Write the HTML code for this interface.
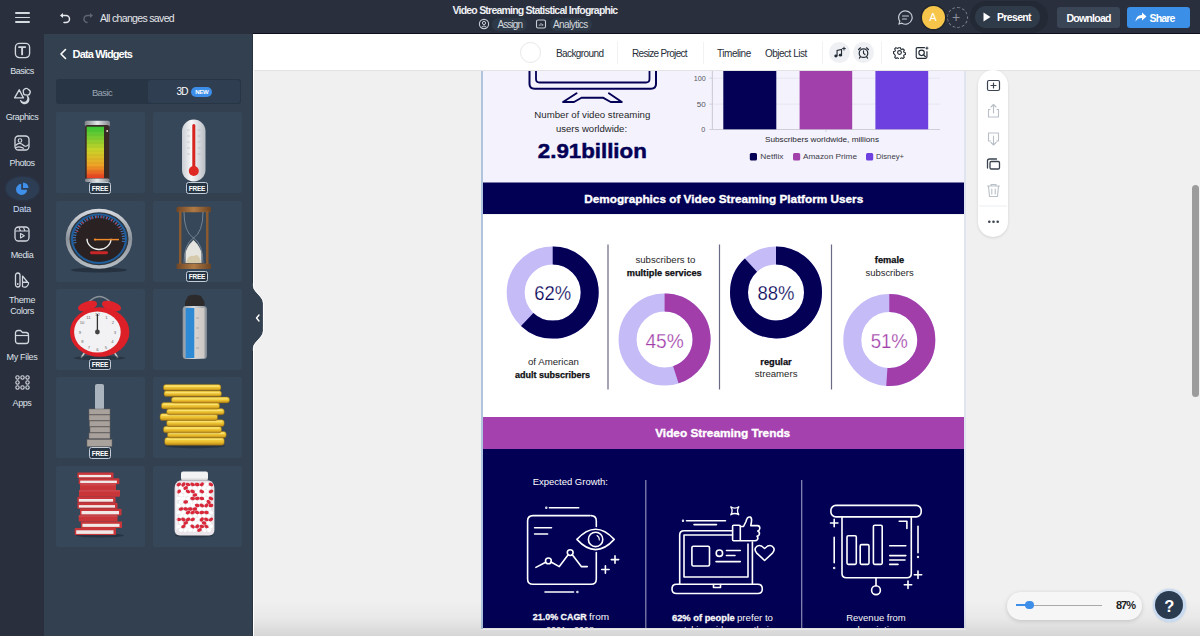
<!DOCTYPE html>
<html><head><meta charset="utf-8">
<style>
*{margin:0;padding:0;box-sizing:border-box}
html,body{width:1200px;height:636px;overflow:hidden;background:#f0f0f0;font-family:"Liberation Sans",sans-serif}
.a{position:absolute}
.t{position:absolute;white-space:nowrap;line-height:1}
#top{left:0;top:0;width:1200px;height:34px;background:#2a2f3e}
#rail{left:0;top:34px;width:44px;height:602px;background:#2a2f3e}
#panel{left:44px;top:34px;width:209px;height:602px;background:#324050}
#tb{left:253px;top:34px;width:947px;height:37px;background:#fff;border-bottom:1px solid #e3e3e3}
.lbl{position:absolute;width:44px;left:0;text-align:center;font-size:9px;color:#dde2e8;line-height:11px}
.card{position:absolute;width:89px;height:81.2px;background:#364759;border-radius:2px}
.free{position:absolute;width:22px;height:12px;border:1px solid #c3cdd8;border-radius:2.5px;background:#263443;color:#fff;font-size:6.5px;font-weight:bold;text-align:center;line-height:9.5px;letter-spacing:-0.2px}
.sep{position:absolute;width:1px;height:22px;top:42px;background:#f1f2f4}
.tbt{position:absolute;top:47.8px;font-size:10px;color:#262d38;white-space:nowrap;line-height:11px}
#ig{left:482px;top:71px;width:482px;height:557.5px;overflow:hidden}
.it{position:absolute;white-space:nowrap;line-height:1;text-align:center}
</style></head><body>
<!-- top bar -->
<div id="top" class="a"></div>
<!-- hamburger -->
<div class="a" style="left:15px;top:12px;width:14.5px;height:1.7px;background:#d5dae0;border-radius:1px"></div>
<div class="a" style="left:15px;top:16.6px;width:14.5px;height:1.7px;background:#d5dae0;border-radius:1px"></div>
<div class="a" style="left:15px;top:21.2px;width:14.5px;height:1.7px;background:#d5dae0;border-radius:1px"></div>
<!-- undo/redo -->
<svg class="a" style="left:58px;top:11px" width="14" height="14" viewBox="0 0 14 14"><path d="M3.5 4.5 H8 a3.5 3.5 0 0 1 0 7 H6" fill="none" stroke="#e6e9ee" stroke-width="1.5" stroke-linecap="round"/><path d="M2 4.5 L5 2 L5 7 Z" fill="#e6e9ee"/></svg>
<svg class="a" style="left:81px;top:11px" width="14" height="14" viewBox="0 0 14 14"><path d="M10.5 4.5 H7 a3.5 3.5 0 0 0 -1 7" fill="none" stroke="#5d6571" stroke-width="1.5" stroke-linecap="round"/><path d="M12 4.5 L9 2 L9 7 Z" fill="#5d6571"/></svg>
<div class="t" style="left:100px;top:13px;font-size:10.5px;letter-spacing:-0.66px;color:#e3e6ea">All changes saved</div>
<!-- title -->
<div class="t" style="left:452.5px;top:5px;font-size:10.5px;font-weight:bold;color:#eef0f3;letter-spacing:-0.78px">Video Streaming Statistical Infographic</div>
<div class="a" style="left:477.6px;top:18px;width:49.3px;height:12.5px;border-radius:6.25px;background:#272e3b"></div><div class="a" style="left:491.7px;top:18px;width:35.2px;height:12.5px;border-radius:6.25px;background:#2e3947"></div>
<svg class="a" style="left:478px;top:18px" width="12" height="12" viewBox="0 0 12 12"><circle cx="6" cy="6" r="4.6" fill="none" stroke="#c9ced6" stroke-width="1.1"/><circle cx="6" cy="5" r="1.6" fill="none" stroke="#c9ced6" stroke-width="1"/><path d="M3.5 9.2 Q6 6.6 8.5 9.2" fill="none" stroke="#c9ced6" stroke-width="1"/></svg>
<div class="t" style="left:497.5px;top:20px;font-size:10px;letter-spacing:-0.9px;color:#d3d8de">Assign</div>
<div class="a" style="left:533.5px;top:18px;width:58.4px;height:12.5px;border-radius:6.25px;background:#272e3b"></div><div class="a" style="left:550px;top:18px;width:41.9px;height:12.5px;border-radius:6.25px;background:#2e3947"></div>
<svg class="a" style="left:535px;top:18px" width="12" height="12" viewBox="0 0 12 12"><rect x="1.5" y="2" width="9" height="8" rx="1.5" fill="none" stroke="#c9ced6" stroke-width="1.1"/><path d="M4.3 6.5v1.3M6 5v2.8M7.7 6v1.8" stroke="#c9ced6" stroke-width="0.9"/></svg>
<div class="t" style="left:553px;top:20px;font-size:10px;letter-spacing:-0.6px;color:#d3d8de">Analytics</div>
<!-- right -->
<svg class="a" style="left:897px;top:9px" width="17" height="17" viewBox="0 0 17 17"><path d="M8.5 1.8 a6.7 6.7 0 1 1 -3.6 12.4 L2 15 L2.8 12.2 A6.7 6.7 0 0 1 8.5 1.8 Z" fill="none" stroke="#c8ced6" stroke-width="1.2"/><path d="M5.5 7h6M5.5 10h4" stroke="#c8ced6" stroke-width="1.1" stroke-linecap="round"/></svg>
<div class="a" style="left:921.5px;top:6px;width:23px;height:23px;border-radius:50%;background:#f6c54a;box-shadow:0 0 0 1.5px #20252f;color:#fff;font-size:11px;text-align:center;line-height:23px">A</div>
<div class="a" style="left:946.5px;top:7px;width:21px;height:21px;border-radius:50%;border:1px dashed #7b838f"></div>
<div class="t" style="left:952px;top:10px;font-size:14px;color:#8b929c;font-weight:normal">+</div>
<div class="a" style="left:970px;top:1px;width:78px;height:32px;border-radius:16px;background:#242936"></div>
<div class="a" style="left:975px;top:6px;width:65px;height:22px;border-radius:11px;background:#303b4a"></div>
<svg class="a" style="left:983px;top:12px" width="8" height="10" viewBox="0 0 8 10"><path d="M0.5 0.5 L7.5 5 L0.5 9.5 Z" fill="#fff"/></svg>
<div class="t" style="left:997px;top:12px;font-size:10.5px;letter-spacing:-0.65px;font-weight:bold;color:#fff">Present</div>
<div class="a" style="left:1057px;top:7px;width:63px;height:21px;border-radius:3px;background:#3a4656"></div>
<div class="t" style="left:1066.4px;top:12.5px;font-size:10.5px;letter-spacing:-0.73px;font-weight:bold;color:#fff">Download</div>
<div class="a" style="left:1127px;top:7px;width:63px;height:21px;border-radius:3px;background:#3b8fe6"></div>
<svg class="a" style="left:1135px;top:12px" width="12" height="10" viewBox="0 0 12 10"><path d="M7 0.5 L11.5 4.5 L7 8.5 V6 C4 6 2 7 0.5 9.5 C1 5.5 3 3.2 7 3 Z" fill="#fff"/></svg>
<div class="t" style="left:1149.6px;top:12.5px;font-size:10.5px;letter-spacing:-0.88px;font-weight:bold;color:#fff">Share</div>
<div id="rail" class="a"></div>
<svg class="a" style="left:0;top:38px" width="44" height="24" viewBox="0 38 44 24"><rect x="15.4" y="43.4" width="14.2" height="14.2" rx="4" fill="none" stroke="#d3d8df" stroke-width="1.35"/><path d="M19 47.1 H25.2 M22.1 47.1 V54.4" fill="none" stroke="#d3d8df" stroke-width="1.9" stroke-linecap="round"/></svg>
<div class="lbl" style="top:66px;letter-spacing:-0.5px">Basics</div>
<svg class="a" style="left:0;top:80px" width="44" height="30" viewBox="0 80 44 30"><g fill="none" stroke="#d3d8df" stroke-width="1.35" stroke-linejoin="round"><path d="M19.2 89.8 L14.6 97.9 H23.4 Z"/><path d="M24.2 89.3 Q26.8 87.3 28.6 89.6 Q31.2 91 29.8 93.6 Q28.8 95.8 26.2 94.9 Q23.6 95.2 23.4 92.6 Q22.6 90.6 24.2 89.3 Z"/><path d="M27.4 96.2 A4.2 4.2 0 1 1 20.6 100.6 A3.6 3.6 0 0 0 27.4 96.2 Z"/></g></svg>
<div class="lbl" style="top:111.5px;letter-spacing:-0.44px">Graphics</div>
<svg class="a" style="left:14px;top:134.5px" width="16" height="16" viewBox="0 0 16 16"><rect x="1" y="1" width="14" height="14" rx="3.5" fill="none" stroke="#d3d8df" stroke-width="1.3"/><circle cx="6" cy="5.5" r="1.8" fill="none" stroke="#d3d8df" stroke-width="1.1"/><path d="M1.5 10.5 C4 8 7 8 9 10 C11 12 13 11.5 14.5 9.5" fill="none" stroke="#d3d8df" stroke-width="1.2"/><path d="M1.5 13 C4.5 11 7.5 12 10 13.5" fill="none" stroke="#d3d8df" stroke-width="1.1"/></svg>
<div class="lbl" style="top:158px;letter-spacing:-0.5px">Photos</div>
<div class="a" style="left:6px;top:176.5px;width:33px;height:23px;border-radius:50%;background:#2d3e54;box-shadow:0 0 2px 1px rgba(45,62,84,0.6)"></div>
<svg class="a" style="left:15px;top:181.5px" width="15" height="14" viewBox="0 0 15 14"><path d="M6.2 1.8 A5.6 5.6 0 1 0 12.2 7.8 H6.2 Z" fill="#3f90ea"/><path d="M8 0.5 A5.5 5.5 0 0 1 13.5 6 H8 Z" fill="#3f90ea"/></svg>
<div class="lbl" style="top:203.5px;color:#c8dcf5;letter-spacing:-0.25px">Data</div>
<svg class="a" style="left:14px;top:225.5px" width="16" height="16" viewBox="0 0 16 16"><rect x="1" y="1" width="14" height="14" rx="3.5" fill="none" stroke="#d3d8df" stroke-width="1.3"/><path d="M1.5 5h13M5 1.5l1.5 3.5M9.5 1.5l1.5 3.5" stroke="#d3d8df" stroke-width="1.1"/><path d="M6.5 7.5v4.5l3.8-2.25z" fill="none" stroke="#d3d8df" stroke-width="1.1" stroke-linejoin="round"/></svg>
<div class="lbl" style="top:249.5px;letter-spacing:-0.4px">Media</div>
<svg class="a" style="left:14px;top:272px" width="16" height="16" viewBox="0 0 16 16"><rect x="1.5" y="1" width="4.5" height="14" rx="2.25" fill="none" stroke="#d3d8df" stroke-width="1.3"/><circle cx="3.75" cy="12" r="0.9" fill="#d3d8df"/><path d="M8.5 4 L13.5 10 H8.5 Z" fill="none" stroke="#d3d8df" stroke-width="1.2" stroke-linejoin="round"/><path d="M8.5 10.5 H14.5 A4 4 0 0 1 8.5 14.5 Z" fill="none" stroke="#d3d8df" stroke-width="1.2" stroke-linejoin="round"/></svg>
<div class="lbl" style="top:295px;letter-spacing:-0.4px">Theme</div>
<div class="lbl" style="top:306px;letter-spacing:-0.4px">Colors</div>
<svg class="a" style="left:14px;top:328.5px" width="16" height="16" viewBox="0 0 16 16"><path d="M1.5 4 A2.5 2.5 0 0 1 4 1.5 H6.5 L8.5 3.5 H12 A2.5 2.5 0 0 1 14.5 6 V12 A2.5 2.5 0 0 1 12 14.5 H4 A2.5 2.5 0 0 1 1.5 12 Z" fill="none" stroke="#d3d8df" stroke-width="1.3" stroke-linejoin="round"/><path d="M1.5 6.5h13" stroke="#d3d8df" stroke-width="1.2"/></svg>
<div class="lbl" style="top:352px;letter-spacing:-0.31px">My Files</div>
<svg class="a" style="left:14.5px;top:375px" width="15" height="15" viewBox="0 0 15 15"><g fill="none" stroke="#d3d8df" stroke-width="1.1"><circle cx="2.5" cy="2.5" r="1.7"/><circle cx="7.5" cy="2.5" r="1.7"/><circle cx="12.5" cy="2.5" r="1.7"/><circle cx="2.5" cy="7.5" r="1.7"/><circle cx="12.5" cy="7.5" r="1.7"/><circle cx="2.5" cy="12.5" r="1.7"/><circle cx="7.5" cy="12.5" r="1.7"/><circle cx="12.5" cy="12.5" r="1.7"/></g></svg>
<div class="lbl" style="top:397.5px;letter-spacing:-0.4px">Apps</div>
<div id="panel" class="a"></div>
<svg class="a" style="left:59px;top:48px" width="9" height="12" viewBox="0 0 9 12"><path d="M6.5 1.5 L2 6 L6.5 10.5" fill="none" stroke="#fff" stroke-width="1.6" stroke-linecap="round" stroke-linejoin="round"/></svg>
<div class="t" style="left:72.6px;top:49px;font-size:11px;font-weight:bold;letter-spacing:-0.85px;color:#fff">Data Widgets</div>
<div class="a" style="left:55.5px;top:79px;width:185.5px;height:25px;border-radius:3px;background:#283545"></div>
<div class="a" style="left:148px;top:80px;width:92px;height:23px;border-radius:3px;background:#2f3e50"></div>
<div class="t" style="left:55.5px;width:93px;text-align:center;top:87.5px;font-size:9.5px;letter-spacing:-0.6px;color:#9aa6b3">Basic</div>
<div class="t" style="left:176.6px;top:87px;font-size:10px;letter-spacing:-0.8px;color:#fff">3D</div>
<div class="a" style="left:191.3px;top:86.8px;width:21px;height:10.2px;border-radius:5px;background:#3d8ee8;color:#fff;font-size:6px;font-weight:bold;line-height:10.2px;text-align:center;letter-spacing:-0.3px">NEW</div>
<div class="card" style="left:56px;top:112.3px"></div><div class="card" style="left:152.5px;top:112.3px"></div>
<div class="card" style="left:56px;top:200.6px"></div><div class="card" style="left:152.5px;top:200.6px"></div>
<div class="card" style="left:56px;top:288.9px"></div><div class="card" style="left:152.5px;top:288.9px"></div>
<div class="card" style="left:56px;top:377.2px"></div><div class="card" style="left:152.5px;top:377.2px"></div>
<div class="card" style="left:56px;top:465.5px"></div><div class="card" style="left:152.5px;top:465.5px"></div>
<svg class="a" style="left:0;top:0" width="260" height="636" viewBox="0 0 260 636">
<defs>
<linearGradient id="batg" x1="0" y1="0" x2="0" y2="1"><stop offset="0" stop-color="#37c636"/><stop offset="0.45" stop-color="#c9d42a"/><stop offset="0.75" stop-color="#f0a326"/><stop offset="1" stop-color="#e53a22"/></linearGradient>
<linearGradient id="silvv" x1="0" y1="0" x2="0" y2="1"><stop offset="0" stop-color="#d9dde2"/><stop offset="0.5" stop-color="#8d939b"/><stop offset="1" stop-color="#b8bec5"/></linearGradient>
<linearGradient id="silv" x1="0" y1="0" x2="1" y2="0"><stop offset="0" stop-color="#7d8288"/><stop offset="0.5" stop-color="#e4e6e8"/><stop offset="1" stop-color="#80858b"/></linearGradient>
<linearGradient id="thw" x1="0" y1="0" x2="1" y2="0"><stop offset="0" stop-color="#c9cdd2"/><stop offset="0.4" stop-color="#f7f7f8"/><stop offset="1" stop-color="#b9bec4"/></linearGradient>
<radialGradient id="spd" cx="0.5" cy="0.5" r="0.5"><stop offset="0.6" stop-color="#2a2d33"/><stop offset="0.85" stop-color="#1b4a7a"/><stop offset="1" stop-color="#0f1a28"/></radialGradient>
<linearGradient id="gold" x1="0" y1="0" x2="0" y2="1"><stop offset="0" stop-color="#ffe25a"/><stop offset="0.6" stop-color="#e9bd2c"/><stop offset="1" stop-color="#b9861a"/></linearGradient>
<linearGradient id="btl" x1="0" y1="0" x2="1" y2="0"><stop offset="0" stop-color="#8f969e"/><stop offset="0.45" stop-color="#d6dadf"/><stop offset="1" stop-color="#8a9097"/></linearGradient>
<linearGradient id="wood" x1="0" y1="0" x2="1" y2="0"><stop offset="0" stop-color="#6e4526"/><stop offset="0.5" stop-color="#b07a44"/><stop offset="1" stop-color="#6b4424"/></linearGradient>
</defs>
<!-- battery -->
<rect x="84.7" y="120.7" width="25.3" height="6" rx="2" fill="url(#silv)"/>
<rect x="85.2" y="125" width="24" height="55" rx="2" fill="#3a2a24"/>
<rect x="86.7" y="126.7" width="17.3" height="51.5" fill="url(#batg)"/>
<g stroke="#000" stroke-opacity="0.12" stroke-width="0.5"><path d="M86.7 131h17.3M86.7 135h17.3M86.7 139h17.3M86.7 143h17.3M86.7 147h17.3M86.7 151h17.3M86.7 155h17.3M86.7 159h17.3M86.7 163h17.3M86.7 167h17.3M86.7 171h17.3M86.7 175h17.3"/></g>
<rect x="85" y="178.5" width="24.5" height="3.5" rx="1.5" fill="url(#silv)"/>
<circle cx="107.2" cy="131" r="0.9" fill="#eee"/>
<!-- thermometer -->
<rect x="182" y="119.5" width="23.5" height="62" rx="11.75" fill="url(#thw)"/>
<rect x="192.3" y="124" width="3" height="44" rx="1.5" fill="#d8241f"/>
<circle cx="193.8" cy="171" r="5" fill="#de2a22"/>
<g stroke="#9aa0a6" stroke-width="0.4"><path d="M187 130h3M187 136h3M187 142h3M187 148h3M187 154h3M197.5 130h3M197.5 136h3M197.5 142h3M197.5 148h3M197.5 154h3"/></g>
<!-- speedometer -->
<ellipse cx="99" cy="270" rx="28" ry="2.5" fill="#1f2a36" opacity="0.7"/>
<g transform="translate(99 238.7) scale(1 0.9)">
<circle r="33.3" fill="url(#silvv)"/>
<circle r="29.5" fill="#30363e"/>
<circle r="28" fill="#1e5fa0"/>
<circle r="26" fill="#2a2222"/>
<path d="M-24 5 A24.5 24.5 0 1 1 24 5" fill="none" stroke="#3b78c0" stroke-width="3" stroke-dasharray="1.2 1.6"/>
<path d="M-22 -8 A23 23 0 0 1 22 -8" fill="none" stroke="#d0384a" stroke-width="3" stroke-dasharray="0.8 4.5"/>
<path d="M-12 0 A12 12 0 1 0 12 0" fill="none" stroke="#f0f0f0" stroke-width="1.4"/>
<path d="M-4 1 L20 1" stroke="#f08a2a" stroke-width="1.6"/>
<circle cx="-4" cy="1" r="1.2" fill="#f08a2a"/>
<rect x="-9" y="14" width="18" height="3.2" rx="1.6" fill="#c92727"/>
</g>
<!-- hourglass -->
<rect x="176.5" y="206.7" width="34.5" height="5.5" rx="1.5" fill="url(#wood)"/>
<rect x="176.5" y="263.5" width="34.5" height="5.5" rx="1.5" fill="url(#wood)"/>
<rect x="179" y="211" width="2.5" height="53" fill="#8a5a30"/>
<rect x="206" y="211" width="2.5" height="53" fill="#8a5a30"/>
<path d="M184 212 Q184 232 193.5 238 Q203 232 203 212 M193.5 238 Q184 244 184 263 M193.5 238 Q203 244 203 263" fill="none" stroke="#b9c3cc" stroke-width="0.6" opacity="0.8"/>
<path d="M185.5 263 V254 Q186 247 193.5 240 Q201 247 201.5 254 V263 Z" fill="#e6e4df"/>
<path d="M186 263 Q188 254 194 256 Q199 252 201 263 Z" fill="#cdbf96" opacity="0.7"/>
<!-- alarm clock -->
<path d="M88 303 Q99.5 290 111 303" fill="none" stroke="#8c939b" stroke-width="1.5"/>
<path d="M81 358 L85 352 M118 358 L114 352" stroke="#c8c8c8" stroke-width="1.6"/>
<ellipse cx="99.5" cy="358" rx="26" ry="2.2" fill="#1f2a36" opacity="0.6"/>
<ellipse cx="87.5" cy="306" rx="10" ry="4.6" fill="#e0232b" transform="rotate(-18 87.5 306)"/>
<ellipse cx="111.5" cy="306" rx="10" ry="4.6" fill="#e0232b" transform="rotate(18 111.5 306)"/>
<ellipse cx="99.7" cy="332" rx="29.7" ry="24.8" fill="#dd1f27"/>
<ellipse cx="97.4" cy="332" rx="23.3" ry="20.6" fill="#f2f2f4"/>
<g fill="#666" font-family="Liberation Sans" font-size="4.2" text-anchor="middle"><text x="97.4" y="316">12</text><text x="106.5" y="318.5">1</text><text x="113" y="324">2</text><text x="115" y="333.5">3</text><text x="112.5" y="343">4</text><text x="106" y="349">5</text><text x="97.4" y="351">6</text><text x="89" y="349">7</text><text x="82.5" y="343">8</text><text x="80" y="333.5">9</text><text x="82" y="324">10</text><text x="88.5" y="318.5">11</text></g>
<path d="M97.4 332 V314" stroke="#333" stroke-width="1.3"/>
<circle cx="97.4" cy="332" r="2.4" fill="#444"/>
<!-- bottle -->
<path d="M188 296 Q194.5 293.5 201 296 L204.5 302 V306.5 H185 V302 Z" fill="#2c2a2a"/>
<rect x="182.7" y="306" width="24.2" height="53" rx="3.5" fill="url(#btl)"/>
<rect x="185.6" y="308" width="8.9" height="50" fill="#2f8ad6"/>
<rect x="194.5" y="308" width="10" height="50" fill="#d9d2cc" opacity="0.8"/>
<g stroke="#8a7f78" stroke-width="0.5"><path d="M196 318h3M196 328h3M196 338h3M196 348h3"/></g>
<!-- bolt -->
<rect x="95" y="384" width="9" height="26" rx="2" fill="#a9b4bf"/>
<g fill="#a9a29c" stroke="#6b625c" stroke-width="0.5"><rect x="89" y="409" width="21" height="5.5"/><rect x="89" y="415" width="21" height="5.5"/><rect x="89.5" y="421" width="20.5" height="5.5"/><rect x="90" y="427" width="20" height="5.5"/><rect x="89" y="433" width="21" height="5.5"/><rect x="87" y="439.5" width="25" height="7"/></g>
<!-- coins -->
<ellipse cx="195" cy="446" rx="30" ry="2.2" fill="#1c2733" opacity="0.6"/>
<rect x="164.7" y="437.4" width="59.5" height="7.8" rx="2.6" fill="url(#gold)" stroke="#8a6510" stroke-width="0.5"/>
<rect x="166.7" y="438.7" width="55.5" height="1.2" fill="#fff3a0" opacity="0.5"/>
<rect x="167.4" y="431.5" width="58.8" height="6.3" rx="2.6" fill="url(#gold)" stroke="#8a6510" stroke-width="0.5"/>
<rect x="169.4" y="432.8" width="54.8" height="1.2" fill="#fff3a0" opacity="0.5"/>
<rect x="163.4" y="426.3" width="58.1" height="6.5" rx="2.6" fill="url(#gold)" stroke="#8a6510" stroke-width="0.5"/>
<rect x="165.4" y="427.6" width="54.1" height="1.2" fill="#fff3a0" opacity="0.5"/>
<rect x="166.7" y="419.8" width="57.5" height="6.7" rx="2.6" fill="url(#gold)" stroke="#8a6510" stroke-width="0.5"/>
<rect x="168.7" y="421.1" width="53.5" height="1.2" fill="#fff3a0" opacity="0.5"/>
<rect x="160" y="413.4" width="57.5" height="7.1" rx="2.6" fill="url(#gold)" stroke="#8a6510" stroke-width="0.5"/>
<rect x="162" y="414.7" width="53.5" height="1.2" fill="#fff3a0" opacity="0.5"/>
<rect x="166.7" y="408.6" width="57.5" height="6.2" rx="2.6" fill="url(#gold)" stroke="#8a6510" stroke-width="0.5"/>
<rect x="168.7" y="409.90000000000003" width="53.5" height="1.2" fill="#fff3a0" opacity="0.5"/>
<rect x="161.4" y="402.6" width="58.1" height="6.4" rx="2.6" fill="url(#gold)" stroke="#8a6510" stroke-width="0.5"/>
<rect x="163.4" y="403.90000000000003" width="54.1" height="1.2" fill="#fff3a0" opacity="0.5"/>
<rect x="171.4" y="397" width="58.1" height="5.9" rx="2.6" fill="url(#gold)" stroke="#8a6510" stroke-width="0.5"/>
<rect x="173.4" y="398.3" width="54.1" height="1.2" fill="#fff3a0" opacity="0.5"/>
<rect x="164" y="390.8" width="57.5" height="5.8" rx="2.6" fill="url(#gold)" stroke="#8a6510" stroke-width="0.5"/>
<rect x="166" y="392.1" width="53.5" height="1.2" fill="#fff3a0" opacity="0.5"/>
<rect x="163.4" y="384.4" width="57.5" height="6.2" rx="2.6" fill="url(#gold)" stroke="#8a6510" stroke-width="0.5"/>
<rect x="165.4" y="385.7" width="53.5" height="1.2" fill="#fff3a0" opacity="0.5"/>
<!-- books -->
<ellipse cx="100" cy="535.5" rx="24" ry="2" fill="#1c2733" opacity="0.6"/>
<rect x="77.4" y="472.6" width="36.1" height="5.7" rx="0.8" fill="#c8363a"/>
<rect x="78.9" y="474.9" width="32.1" height="2.3" fill="#f1e9e7"/>
<rect x="78.7" y="478.3" width="40.7" height="5.9" rx="0.8" fill="#c8363a"/>
<rect x="80.2" y="480.6" width="36.7" height="2.5" fill="#f1e9e7"/>
<rect x="80" y="484.2" width="36.0" height="6.0" rx="0.8" fill="#c8363a"/>
<rect x="80" y="484.2" width="36.0" height="1.2" fill="#e0585a" opacity="0.7"/>
<rect x="79" y="490.2" width="41.0" height="6.5" rx="0.8" fill="#c8363a"/>
<rect x="79" y="490.2" width="41.0" height="1.2" fill="#e0585a" opacity="0.7"/>
<rect x="77.4" y="496.7" width="38.2" height="6.1" rx="0.8" fill="#c8363a"/>
<rect x="78.9" y="499.0" width="34.2" height="2.7" fill="#f1e9e7"/>
<rect x="77.4" y="502.8" width="40.1" height="5.9" rx="0.8" fill="#c8363a"/>
<rect x="78.9" y="505.1" width="36.1" height="2.5" fill="#f1e9e7"/>
<rect x="80" y="508.7" width="41.5" height="6.7" rx="0.8" fill="#c8363a"/>
<rect x="81.5" y="511.0" width="37.5" height="3.3" fill="#f1e9e7"/>
<rect x="78.7" y="515.4" width="38.8" height="6.1" rx="0.8" fill="#c8363a"/>
<rect x="78.7" y="515.4" width="38.8" height="1.2" fill="#e0585a" opacity="0.7"/>
<rect x="80.9" y="521.5" width="41.1" height="6.5" rx="0.8" fill="#c8363a"/>
<rect x="82.4" y="523.8" width="37.1" height="3.1" fill="#f1e9e7"/>
<rect x="74.7" y="528" width="41.3" height="7.0" rx="0.8" fill="#c8363a"/>
<rect x="76.2" y="530.3" width="37.3" height="3.6" fill="#f1e9e7"/>
<!-- pill jar -->
<ellipse cx="194" cy="535.5" rx="19" ry="2" fill="#1f2a36" opacity="0.5"/>
<rect x="181" y="471.6" width="27" height="8.5" rx="2" fill="#f3f3f3"/>
<rect x="181.5" y="478.5" width="26" height="2" fill="#d9d9d9"/>
<path d="M180 480.5 H209 Q214.4 482 214.4 488 V530 Q214.4 535.4 209 535.4 H180 Q174.6 535.4 174.6 530 V488 Q174.6 482 180 480.5 Z" fill="#e9e5e8"/>
<ellipse cx="178.8" cy="484.5" rx="2.4" ry="1.7" fill="#d8283a" transform="rotate(-31 178.8 484.5)"/><ellipse cx="183.4" cy="484.5" rx="2.4" ry="1.7" fill="#d8283a" transform="rotate(-44 183.4 484.5)"/><ellipse cx="188.0" cy="484.5" rx="2.4" ry="1.7" fill="#d8283a" transform="rotate(18 188.0 484.5)"/><ellipse cx="192.6" cy="484.5" rx="2.4" ry="1.7" fill="#d8283a" transform="rotate(24 192.6 484.5)"/><ellipse cx="197.2" cy="484.5" rx="2.4" ry="1.7" fill="#d8283a" transform="rotate(14 197.2 484.5)"/><ellipse cx="201.8" cy="484.5" rx="2.4" ry="1.7" fill="#d8283a" transform="rotate(-39 201.8 484.5)"/><ellipse cx="206.4" cy="484.5" rx="2.4" ry="1.7" fill="#ffffff" transform="rotate(-42 206.4 484.5)"/><ellipse cx="211.0" cy="484.5" rx="2.4" ry="1.7" fill="#d8283a" transform="rotate(20 211.0 484.5)"/><ellipse cx="181.1" cy="488.0" rx="2.4" ry="1.7" fill="#ffffff" transform="rotate(22 181.1 488.0)"/><ellipse cx="185.7" cy="488.0" rx="2.4" ry="1.7" fill="#d8283a" transform="rotate(-22 185.7 488.0)"/><ellipse cx="190.3" cy="488.0" rx="2.4" ry="1.7" fill="#ffffff" transform="rotate(24 190.3 488.0)"/><ellipse cx="194.9" cy="488.0" rx="2.4" ry="1.7" fill="#ffffff" transform="rotate(23 194.9 488.0)"/><ellipse cx="199.5" cy="488.0" rx="2.4" ry="1.7" fill="#ffffff" transform="rotate(-44 199.5 488.0)"/><ellipse cx="204.1" cy="488.0" rx="2.4" ry="1.7" fill="#ffffff" transform="rotate(-45 204.1 488.0)"/><ellipse cx="208.7" cy="488.0" rx="2.4" ry="1.7" fill="#ffffff" transform="rotate(-33 208.7 488.0)"/><ellipse cx="178.8" cy="491.5" rx="2.4" ry="1.7" fill="#d8283a" transform="rotate(-32 178.8 491.5)"/><ellipse cx="183.4" cy="491.5" rx="2.4" ry="1.7" fill="#ffffff" transform="rotate(23 183.4 491.5)"/><ellipse cx="188.0" cy="491.5" rx="2.4" ry="1.7" fill="#d8283a" transform="rotate(37 188.0 491.5)"/><ellipse cx="192.6" cy="491.5" rx="2.4" ry="1.7" fill="#d8283a" transform="rotate(24 192.6 491.5)"/><ellipse cx="197.2" cy="491.5" rx="2.4" ry="1.7" fill="#ffffff" transform="rotate(-26 197.2 491.5)"/><ellipse cx="201.8" cy="491.5" rx="2.4" ry="1.7" fill="#d8283a" transform="rotate(20 201.8 491.5)"/><ellipse cx="206.4" cy="491.5" rx="2.4" ry="1.7" fill="#ffffff" transform="rotate(22 206.4 491.5)"/><ellipse cx="211.0" cy="491.5" rx="2.4" ry="1.7" fill="#d8283a" transform="rotate(-24 211.0 491.5)"/><ellipse cx="181.1" cy="495.0" rx="2.4" ry="1.7" fill="#ffffff" transform="rotate(18 181.1 495.0)"/><ellipse cx="185.7" cy="495.0" rx="2.4" ry="1.7" fill="#ffffff" transform="rotate(-10 185.7 495.0)"/><ellipse cx="190.3" cy="495.0" rx="2.4" ry="1.7" fill="#ffffff" transform="rotate(8 190.3 495.0)"/><ellipse cx="194.9" cy="495.0" rx="2.4" ry="1.7" fill="#d8283a" transform="rotate(-19 194.9 495.0)"/><ellipse cx="199.5" cy="495.0" rx="2.4" ry="1.7" fill="#ffffff" transform="rotate(39 199.5 495.0)"/><ellipse cx="204.1" cy="495.0" rx="2.4" ry="1.7" fill="#ffffff" transform="rotate(-40 204.1 495.0)"/><ellipse cx="208.7" cy="495.0" rx="2.4" ry="1.7" fill="#ffffff" transform="rotate(17 208.7 495.0)"/><ellipse cx="178.8" cy="498.5" rx="2.4" ry="1.7" fill="#ffffff" transform="rotate(-7 178.8 498.5)"/><ellipse cx="183.4" cy="498.5" rx="2.4" ry="1.7" fill="#ffffff" transform="rotate(-14 183.4 498.5)"/><ellipse cx="188.0" cy="498.5" rx="2.4" ry="1.7" fill="#ffffff" transform="rotate(-41 188.0 498.5)"/><ellipse cx="192.6" cy="498.5" rx="2.4" ry="1.7" fill="#d8283a" transform="rotate(3 192.6 498.5)"/><ellipse cx="197.2" cy="498.5" rx="2.4" ry="1.7" fill="#d8283a" transform="rotate(-7 197.2 498.5)"/><ellipse cx="201.8" cy="498.5" rx="2.4" ry="1.7" fill="#d8283a" transform="rotate(12 201.8 498.5)"/><ellipse cx="206.4" cy="498.5" rx="2.4" ry="1.7" fill="#ffffff" transform="rotate(35 206.4 498.5)"/><ellipse cx="211.0" cy="498.5" rx="2.4" ry="1.7" fill="#d8283a" transform="rotate(21 211.0 498.5)"/><ellipse cx="181.1" cy="502.0" rx="2.4" ry="1.7" fill="#ffffff" transform="rotate(-10 181.1 502.0)"/><ellipse cx="185.7" cy="502.0" rx="2.4" ry="1.7" fill="#d8283a" transform="rotate(-6 185.7 502.0)"/><ellipse cx="190.3" cy="502.0" rx="2.4" ry="1.7" fill="#ffffff" transform="rotate(24 190.3 502.0)"/><ellipse cx="194.9" cy="502.0" rx="2.4" ry="1.7" fill="#ffffff" transform="rotate(-42 194.9 502.0)"/><ellipse cx="199.5" cy="502.0" rx="2.4" ry="1.7" fill="#ffffff" transform="rotate(-16 199.5 502.0)"/><ellipse cx="204.1" cy="502.0" rx="2.4" ry="1.7" fill="#ffffff" transform="rotate(35 204.1 502.0)"/><ellipse cx="208.7" cy="502.0" rx="2.4" ry="1.7" fill="#d8283a" transform="rotate(43 208.7 502.0)"/><ellipse cx="178.8" cy="505.5" rx="2.4" ry="1.7" fill="#ffffff" transform="rotate(32 178.8 505.5)"/><ellipse cx="183.4" cy="505.5" rx="2.4" ry="1.7" fill="#ffffff" transform="rotate(37 183.4 505.5)"/><ellipse cx="188.0" cy="505.5" rx="2.4" ry="1.7" fill="#ffffff" transform="rotate(-14 188.0 505.5)"/><ellipse cx="192.6" cy="505.5" rx="2.4" ry="1.7" fill="#ffffff" transform="rotate(35 192.6 505.5)"/><ellipse cx="197.2" cy="505.5" rx="2.4" ry="1.7" fill="#d8283a" transform="rotate(9 197.2 505.5)"/><ellipse cx="201.8" cy="505.5" rx="2.4" ry="1.7" fill="#d8283a" transform="rotate(28 201.8 505.5)"/><ellipse cx="206.4" cy="505.5" rx="2.4" ry="1.7" fill="#d8283a" transform="rotate(-43 206.4 505.5)"/><ellipse cx="211.0" cy="505.5" rx="2.4" ry="1.7" fill="#d8283a" transform="rotate(-14 211.0 505.5)"/><ellipse cx="181.1" cy="509.0" rx="2.4" ry="1.7" fill="#d8283a" transform="rotate(-19 181.1 509.0)"/><ellipse cx="185.7" cy="509.0" rx="2.4" ry="1.7" fill="#d8283a" transform="rotate(13 185.7 509.0)"/><ellipse cx="190.3" cy="509.0" rx="2.4" ry="1.7" fill="#d8283a" transform="rotate(7 190.3 509.0)"/><ellipse cx="194.9" cy="509.0" rx="2.4" ry="1.7" fill="#d8283a" transform="rotate(-15 194.9 509.0)"/><ellipse cx="199.5" cy="509.0" rx="2.4" ry="1.7" fill="#ffffff" transform="rotate(5 199.5 509.0)"/><ellipse cx="204.1" cy="509.0" rx="2.4" ry="1.7" fill="#ffffff" transform="rotate(-15 204.1 509.0)"/><ellipse cx="208.7" cy="509.0" rx="2.4" ry="1.7" fill="#ffffff" transform="rotate(-5 208.7 509.0)"/><ellipse cx="178.8" cy="512.5" rx="2.4" ry="1.7" fill="#ffffff" transform="rotate(-2 178.8 512.5)"/><ellipse cx="183.4" cy="512.5" rx="2.4" ry="1.7" fill="#ffffff" transform="rotate(-31 183.4 512.5)"/><ellipse cx="188.0" cy="512.5" rx="2.4" ry="1.7" fill="#d8283a" transform="rotate(-31 188.0 512.5)"/><ellipse cx="192.6" cy="512.5" rx="2.4" ry="1.7" fill="#d8283a" transform="rotate(-21 192.6 512.5)"/><ellipse cx="197.2" cy="512.5" rx="2.4" ry="1.7" fill="#d8283a" transform="rotate(25 197.2 512.5)"/><ellipse cx="201.8" cy="512.5" rx="2.4" ry="1.7" fill="#d8283a" transform="rotate(-14 201.8 512.5)"/><ellipse cx="206.4" cy="512.5" rx="2.4" ry="1.7" fill="#d8283a" transform="rotate(3 206.4 512.5)"/><ellipse cx="211.0" cy="512.5" rx="2.4" ry="1.7" fill="#ffffff" transform="rotate(28 211.0 512.5)"/><ellipse cx="181.1" cy="516.0" rx="2.4" ry="1.7" fill="#ffffff" transform="rotate(-34 181.1 516.0)"/><ellipse cx="185.7" cy="516.0" rx="2.4" ry="1.7" fill="#ffffff" transform="rotate(15 185.7 516.0)"/><ellipse cx="190.3" cy="516.0" rx="2.4" ry="1.7" fill="#ffffff" transform="rotate(33 190.3 516.0)"/><ellipse cx="194.9" cy="516.0" rx="2.4" ry="1.7" fill="#ffffff" transform="rotate(-44 194.9 516.0)"/><ellipse cx="199.5" cy="516.0" rx="2.4" ry="1.7" fill="#ffffff" transform="rotate(49 199.5 516.0)"/><ellipse cx="204.1" cy="516.0" rx="2.4" ry="1.7" fill="#ffffff" transform="rotate(37 204.1 516.0)"/><ellipse cx="208.7" cy="516.0" rx="2.4" ry="1.7" fill="#ffffff" transform="rotate(0 208.7 516.0)"/><ellipse cx="178.8" cy="519.5" rx="2.4" ry="1.7" fill="#d8283a" transform="rotate(0 178.8 519.5)"/><ellipse cx="183.4" cy="519.5" rx="2.4" ry="1.7" fill="#d8283a" transform="rotate(31 183.4 519.5)"/><ellipse cx="188.0" cy="519.5" rx="2.4" ry="1.7" fill="#d8283a" transform="rotate(-26 188.0 519.5)"/><ellipse cx="192.6" cy="519.5" rx="2.4" ry="1.7" fill="#d8283a" transform="rotate(-24 192.6 519.5)"/><ellipse cx="197.2" cy="519.5" rx="2.4" ry="1.7" fill="#ffffff" transform="rotate(-36 197.2 519.5)"/><ellipse cx="201.8" cy="519.5" rx="2.4" ry="1.7" fill="#d8283a" transform="rotate(-44 201.8 519.5)"/><ellipse cx="206.4" cy="519.5" rx="2.4" ry="1.7" fill="#d8283a" transform="rotate(22 206.4 519.5)"/><ellipse cx="211.0" cy="519.5" rx="2.4" ry="1.7" fill="#d8283a" transform="rotate(-38 211.0 519.5)"/><ellipse cx="181.1" cy="523.0" rx="2.4" ry="1.7" fill="#ffffff" transform="rotate(28 181.1 523.0)"/><ellipse cx="185.7" cy="523.0" rx="2.4" ry="1.7" fill="#d8283a" transform="rotate(-24 185.7 523.0)"/><ellipse cx="190.3" cy="523.0" rx="2.4" ry="1.7" fill="#ffffff" transform="rotate(-31 190.3 523.0)"/><ellipse cx="194.9" cy="523.0" rx="2.4" ry="1.7" fill="#ffffff" transform="rotate(-6 194.9 523.0)"/><ellipse cx="199.5" cy="523.0" rx="2.4" ry="1.7" fill="#ffffff" transform="rotate(10 199.5 523.0)"/><ellipse cx="204.1" cy="523.0" rx="2.4" ry="1.7" fill="#d8283a" transform="rotate(12 204.1 523.0)"/><ellipse cx="208.7" cy="523.0" rx="2.4" ry="1.7" fill="#ffffff" transform="rotate(9 208.7 523.0)"/><ellipse cx="178.8" cy="526.5" rx="2.4" ry="1.7" fill="#ffffff" transform="rotate(-11 178.8 526.5)"/><ellipse cx="183.4" cy="526.5" rx="2.4" ry="1.7" fill="#d8283a" transform="rotate(-37 183.4 526.5)"/><ellipse cx="188.0" cy="526.5" rx="2.4" ry="1.7" fill="#ffffff" transform="rotate(44 188.0 526.5)"/><ellipse cx="192.6" cy="526.5" rx="2.4" ry="1.7" fill="#d8283a" transform="rotate(38 192.6 526.5)"/><ellipse cx="197.2" cy="526.5" rx="2.4" ry="1.7" fill="#d8283a" transform="rotate(-48 197.2 526.5)"/><ellipse cx="201.8" cy="526.5" rx="2.4" ry="1.7" fill="#d8283a" transform="rotate(17 201.8 526.5)"/><ellipse cx="206.4" cy="526.5" rx="2.4" ry="1.7" fill="#d8283a" transform="rotate(38 206.4 526.5)"/><ellipse cx="211.0" cy="526.5" rx="2.4" ry="1.7" fill="#ffffff" transform="rotate(-47 211.0 526.5)"/><ellipse cx="181.1" cy="530.0" rx="2.4" ry="1.7" fill="#ffffff" transform="rotate(-12 181.1 530.0)"/><ellipse cx="185.7" cy="530.0" rx="2.4" ry="1.7" fill="#ffffff" transform="rotate(-39 185.7 530.0)"/><ellipse cx="190.3" cy="530.0" rx="2.4" ry="1.7" fill="#ffffff" transform="rotate(-17 190.3 530.0)"/><ellipse cx="194.9" cy="530.0" rx="2.4" ry="1.7" fill="#ffffff" transform="rotate(-29 194.9 530.0)"/><ellipse cx="199.5" cy="530.0" rx="2.4" ry="1.7" fill="#d8283a" transform="rotate(-22 199.5 530.0)"/><ellipse cx="204.1" cy="530.0" rx="2.4" ry="1.7" fill="#ffffff" transform="rotate(49 204.1 530.0)"/><ellipse cx="208.7" cy="530.0" rx="2.4" ry="1.7" fill="#ffffff" transform="rotate(31 208.7 530.0)"/>
<rect x="176" y="486" width="1.8" height="44" rx="0.9" fill="#ffffff" opacity="0.5"/>
</svg>
<div class="free" style="left:89px;top:182px;width:22px;height:11.5px"><span style="position:relative;top:0.5px">FREE</span></div><div class="free" style="left:186px;top:182px;width:22px;height:11.5px"><span style="position:relative;top:0.5px">FREE</span></div><div class="free" style="left:186px;top:270.5px;width:22px;height:11.5px"><span style="position:relative;top:0.5px">FREE</span></div><div class="free" style="left:89px;top:358.5px;width:22px;height:11.5px"><span style="position:relative;top:0.5px">FREE</span></div><div class="free" style="left:89px;top:447px;width:22px;height:11.5px"><span style="position:relative;top:0.5px">FREE</span></div>
<div id="tb" class="a"></div>
<div class="a" style="left:253px;top:33px;width:947px;height:1.2px;background:#0c101c"></div>
<div class="a" style="left:252px;top:34px;width:1px;height:602px;background:#2a3440"></div><div class="a" style="left:253px;top:34px;width:1px;height:602px;background:#ffffff"></div>
<svg class="a" style="left:250px;top:283px" width="16" height="68" viewBox="0 0 16 68"><path d="M0 0 L3 0 L3 3 Q3 6 6 9 L10.5 14 Q13 17 13 20 V48 Q13 51 10.5 54 L6 59 Q3 62 3 65 V68 H0 Z" fill="#324050"/><path d="M3.4 0 V3 Q3.4 6 6.3 9 L10.8 14 Q13.4 17 13.4 20 V48 Q13.4 51 10.8 54 L6.3 59 Q3.4 62 3.4 65 V68" fill="none" stroke="#fff" stroke-width="0.8"/><path d="M9 32 L6.5 35 L9 38" fill="none" stroke="#fff" stroke-width="1.4" stroke-linecap="round" stroke-linejoin="round"/></svg>
<div class="a" style="left:519.5px;top:41.8px;width:21px;height:21px;border-radius:50%;border:1px solid #e6e7e9;background:#fff"></div>
<div class="tbt" style="left:556px;letter-spacing:-0.6px">Background</div>
<div class="sep" style="left:617px"></div>
<div class="tbt" style="left:632px;letter-spacing:-0.68px">Resize Project</div>
<div class="sep" style="left:702.5px"></div>
<div class="tbt" style="left:717px;letter-spacing:-0.45px">Timeline</div>
<div class="tbt" style="left:765px;letter-spacing:-0.5px">Object List</div>
<div class="sep" style="left:822px"></div>
<div class="a" style="left:828.5px;top:42px;width:21px;height:21px;border-radius:50%;background:#eef0f3"></div>
<svg class="a" style="left:832.5px;top:46px" width="13" height="13" viewBox="0 0 16 16"><path d="M5 12 V5.5 L10.5 4.3 V11" fill="none" stroke="#222a35" stroke-width="1.4"/><ellipse cx="3.6" cy="12.3" rx="2" ry="1.7" fill="#222a35"/><ellipse cx="9.1" cy="11.3" rx="2" ry="1.7" fill="#222a35"/><path d="M13.5 1v4.5M11.2 3.2h4.5" stroke="#222a35" stroke-width="1.2"/></svg>
<div class="a" style="left:852.5px;top:42px;width:21px;height:21px;border-radius:50%;background:#eef0f3"></div>
<svg class="a" style="left:856.5px;top:45.5px" width="13" height="13" viewBox="0 0 16 16"><circle cx="8" cy="8.8" r="5.3" fill="none" stroke="#222a35" stroke-width="1.5"/><path d="M8 6v3l1.8 1.5" fill="none" stroke="#222a35" stroke-width="1.4" stroke-linecap="round"/><path d="M2 4.3 L4.3 2.2 M14 4.3 L11.7 2.2 M4 13.5 L3 14.8 M12 13.5 L13 14.8" stroke="#222a35" stroke-width="1.5" stroke-linecap="round"/></svg>
<div class="sep" style="left:880.5px"></div>
<svg class="a" style="left:893px;top:46px" width="13" height="13" viewBox="0 0 16 16"><path d="M6.8 1.8h2.4l.4 1.8 1.4.6 1.6-1 1.7 1.7-1 1.6.6 1.4 1.8.4v2.4l-1.8.4-.6 1.4 1 1.6-1.7 1.7-1.6-1-1.4.6-.4 1.8H6.8l-.4-1.8-1.4-.6-1.6 1-1.7-1.7 1-1.6-.6-1.4L.3 9.2V6.8l1.8-.4.6-1.4-1-1.6 1.7-1.7 1.6 1 1.4-.6z" fill="none" stroke="#222a35" stroke-width="1.4" stroke-linejoin="round" transform="translate(0.4 0.4) scale(0.95)"/><circle cx="8" cy="8" r="2.3" fill="none" stroke="#222a35" stroke-width="1.4"/></svg>
<svg class="a" style="left:914.5px;top:45.5px" width="14" height="14" viewBox="0 0 17 17"><path d="M12 2 H3 A1.5 1.5 0 0 0 1.5 3.5 V13.5 A1.5 1.5 0 0 0 3 15 H13 A1.5 1.5 0 0 0 14.5 13.5 V6.5" fill="none" stroke="#222a35" stroke-width="1.4"/><circle cx="8" cy="8.3" r="3.3" fill="none" stroke="#222a35" stroke-width="1.4"/><path d="M10.4 10.7 L13 13.3" stroke="#222a35" stroke-width="1.5"/><path d="M14.5 0.8v3.6M12.7 2.6h3.6" stroke="#222a35" stroke-width="1.2"/></svg>
<!-- infographic -->
<div id="ig" class="a">
<svg class="a" style="left:0;top:0" width="482" height="557" viewBox="482 71 482 557" font-family="Liberation Sans">
<rect x="482" y="71" width="482" height="112" fill="#f4f3fd"/>
<rect x="482" y="182.5" width="482" height="31.7" fill="#010054"/>
<rect x="482" y="214.2" width="482" height="203" fill="#ffffff"/>
<rect x="482" y="417" width="482" height="32" fill="#a441ae"/>
<rect x="482" y="449" width="482" height="179" fill="#010054"/>
<!-- TV -->
<path d="M529.5 60 V84 Q529.5 88.7 534.5 88.7 H651 Q656 88.7 656 84 V60" fill="none" stroke="#030055" stroke-width="2"/>
<path d="M536 60 V79 Q536 82.5 539.5 82.5 H646 Q649.5 82.5 649.5 79 V60" fill="none" stroke="#030055" stroke-width="1.8"/>
<path d="M576.6 93.2 L563 102 H574 L581.5 97.7 H602.9 L610.7 102 H621.8 L608.9 93.2" fill="none" stroke="#030055" stroke-width="1.9" stroke-linejoin="round" stroke-linecap="round"/>
<text x="592.3" y="118.4" text-anchor="middle" font-size="8.5" font-weight="normal" fill="#1f1f28" textLength="116" lengthAdjust="spacingAndGlyphs">Number of video streaming</text>
<text x="591.5" y="131.6" text-anchor="middle" font-size="8.5" font-weight="normal" fill="#1f1f28" textLength="71.2" lengthAdjust="spacingAndGlyphs">users worldwide:</text>
<text x="592.3" y="158.1" text-anchor="middle" font-size="21" font-weight="bold" fill="#030055" stroke="#030055" stroke-width="0.5" textLength="109" lengthAdjust="spacingAndGlyphs">2.91billion</text>
<g stroke="#e3e2ee" stroke-width="0.8"><path d="M712 78.2 H940 M712 104.1 H940"/></g>
<path d="M712.4 71 V129.5 H940" fill="none" stroke="#cfcfda" stroke-width="1.2"/>
<path d="M709.4 78.2 H712 M709.4 104.1 H712 M709.4 129.5 H712 M826 129.5 V132" stroke="#cfcfda" stroke-width="1"/>
<rect x="723.3" y="71" width="53" height="58.3" fill="#030055"/>
<rect x="799.6" y="71" width="52.6" height="58.3" fill="#a13fab"/>
<rect x="875.4" y="71" width="52.8" height="58.3" fill="#6e40df"/>
<text x="705.7" y="81.2" text-anchor="end" font-size="8" font-weight="normal" fill="#555560" textLength="12" lengthAdjust="spacingAndGlyphs">100</text>
<text x="705.7" y="107" text-anchor="end" font-size="8" font-weight="normal" fill="#555560" textLength="9" lengthAdjust="spacingAndGlyphs">50</text>
<text x="705.3" y="132" text-anchor="end" font-size="8" font-weight="normal" fill="#555560" textLength="4" lengthAdjust="spacingAndGlyphs">0</text>
<text x="822" y="142.2" text-anchor="middle" font-size="8" font-weight="normal" fill="#26262e" textLength="114" lengthAdjust="spacingAndGlyphs">Subscribers worldwide, millions</text>
<rect x="749.8" y="153" width="7.2" height="7.4" rx="1.5" fill="#030055"/>
<rect x="793" y="153" width="7.2" height="7.4" rx="1.5" fill="#a13fab"/>
<rect x="866" y="153" width="7.2" height="7.4" rx="1.5" fill="#6e40df"/>
<text x="760.3" y="159.4" text-anchor="start" font-size="8" font-weight="normal" fill="#3c3c48" textLength="23.1" lengthAdjust="spacingAndGlyphs">Netflix</text>
<text x="803" y="159.4" text-anchor="start" font-size="8" font-weight="normal" fill="#3c3c48" textLength="54" lengthAdjust="spacingAndGlyphs">Amazon Prime</text>
<text x="876" y="159.4" text-anchor="start" font-size="8" font-weight="normal" fill="#3c3c48" textLength="28" lengthAdjust="spacingAndGlyphs">Disney+</text>
<text x="723.7" y="202.8" text-anchor="middle" font-size="11.5" font-weight="bold" fill="#ffffff" stroke="#fff" stroke-width="0.35" textLength="279" lengthAdjust="spacingAndGlyphs">Demographics of Video Streaming Platform Users</text>
<g stroke="#6b6a85" stroke-width="1.2"><path d="M608 244.5 V389.5 M719.5 244.5 V389.5 M831.5 244.5 V389.5"/></g>
<circle cx="552.7" cy="292.6" r="37" fill="none" stroke="#c5bbf7" stroke-width="18"/>
<circle cx="552.7" cy="292.6" r="37" fill="none" stroke="#030055" stroke-width="18" stroke-dasharray="144.14 232.48" transform="rotate(-90 552.7 292.6)"/>
<text x="552.7" y="300.2" text-anchor="middle" font-size="20" stroke="#fff" stroke-width="0.25" fill="#030055" textLength="37" lengthAdjust="spacingAndGlyphs">62%</text>
<circle cx="664.6" cy="339.5" r="37" fill="none" stroke="#c5bbf7" stroke-width="18"/>
<circle cx="664.6" cy="339.5" r="37" fill="none" stroke="#a13ea9" stroke-width="18" stroke-dasharray="104.62 232.48" transform="rotate(-90 664.6 339.5)"/>
<text x="664.6" y="347.8" text-anchor="middle" font-size="20" stroke="#fff" stroke-width="0.25" fill="#a13ea9" textLength="38.4" lengthAdjust="spacingAndGlyphs">45%</text>
<circle cx="776" cy="292.4" r="37" fill="none" stroke="#c5bbf7" stroke-width="18"/>
<circle cx="776" cy="292.4" r="37" fill="none" stroke="#030055" stroke-width="18" stroke-dasharray="204.58 232.48" transform="rotate(-90 776 292.4)"/>
<text x="776" y="300" text-anchor="middle" font-size="20" stroke="#fff" stroke-width="0.25" fill="#030055" textLength="37" lengthAdjust="spacingAndGlyphs">88%</text>
<circle cx="889.3" cy="340" r="37" fill="none" stroke="#c5bbf7" stroke-width="18"/>
<circle cx="889.3" cy="340" r="37" fill="none" stroke="#a13ea9" stroke-width="18" stroke-dasharray="118.56 232.48" transform="rotate(-90 889.3 340)"/>
<text x="889.3" y="347.5" text-anchor="middle" font-size="20" stroke="#fff" stroke-width="0.25" fill="#a13ea9" textLength="37.3" lengthAdjust="spacingAndGlyphs">51%</text>
<text x="553.5" y="364.6" text-anchor="middle" font-size="9" font-weight="normal" fill="#1f1f28" textLength="51" lengthAdjust="spacingAndGlyphs">of American</text>
<text x="552.5" y="377.8" text-anchor="middle" font-size="9" font-weight="bold" fill="#0d0d12" stroke="#0d0d12" stroke-width="0.25" textLength="75" lengthAdjust="spacingAndGlyphs">adult subscribers</text>
<text x="665.4" y="263.4" text-anchor="middle" font-size="9" font-weight="normal" fill="#1f1f28" textLength="60" lengthAdjust="spacingAndGlyphs">subscribers to</text>
<text x="664.2" y="276" text-anchor="middle" font-size="9" font-weight="bold" fill="#0d0d12" stroke="#0d0d12" stroke-width="0.25" textLength="75" lengthAdjust="spacingAndGlyphs">multiple services</text>
<text x="776" y="364.6" text-anchor="middle" font-size="9" font-weight="bold" fill="#0d0d12" stroke="#0d0d12" stroke-width="0.25" textLength="31.4" lengthAdjust="spacingAndGlyphs">regular</text>
<text x="776.1" y="377.2" text-anchor="middle" font-size="9" font-weight="normal" fill="#1f1f28" textLength="42.7" lengthAdjust="spacingAndGlyphs">streamers</text>
<text x="889.5" y="263.2" text-anchor="middle" font-size="9" font-weight="bold" fill="#0d0d12" stroke="#0d0d12" stroke-width="0.25" textLength="29.4" lengthAdjust="spacingAndGlyphs">female</text>
<text x="889.6" y="276" text-anchor="middle" font-size="9" font-weight="normal" fill="#1f1f28" textLength="48.3" lengthAdjust="spacingAndGlyphs">subscribers</text>
<text x="722.7" y="437.1" text-anchor="middle" font-size="11.5" font-weight="bold" fill="#ffffff" stroke="#fff" stroke-width="0.35" textLength="135" lengthAdjust="spacingAndGlyphs">Video Streaming Trends</text>
<g stroke="#8f8db8" stroke-width="1.2"><path d="M645.8 480 V628 M801.7 480 V628"/></g>
<text x="570.4" y="484.5" text-anchor="middle" font-size="8.8" font-weight="normal" fill="#ffffff" textLength="75.2" lengthAdjust="spacingAndGlyphs">Expected Growth:</text>
<text x="532.8" y="620.2" font-size="9" fill="#ffffff"><tspan font-weight="bold" stroke="#fff" stroke-width="0.3" textLength="54" lengthAdjust="spacingAndGlyphs">21.0% CAGR</tspan><tspan dx="2.3" textLength="20" lengthAdjust="spacingAndGlyphs">from</tspan></text>
<text x="672" y="620.5" font-size="9" fill="#ffffff"><tspan font-weight="bold" stroke="#fff" stroke-width="0.3" textLength="62.7" lengthAdjust="spacingAndGlyphs">62% of people</tspan><tspan dx="2.3" textLength="36" lengthAdjust="spacingAndGlyphs">prefer to</tspan></text>
<text x="876" y="620.5" text-anchor="middle" font-size="9" font-weight="normal" fill="#ffffff" textLength="59.5" lengthAdjust="spacingAndGlyphs">Revenue from</text>
<text x="570" y="633" text-anchor="middle" font-size="9" font-weight="normal" fill="#ffffff" textLength="48" lengthAdjust="spacingAndGlyphs">2021 - 2028</text>
<text x="722" y="633" text-anchor="middle" font-size="9" font-weight="normal" fill="#ffffff" textLength="100" lengthAdjust="spacingAndGlyphs">watching videos on their</text>
<text x="876" y="633" text-anchor="middle" font-size="9" font-weight="normal" fill="#ffffff" textLength="58" lengthAdjust="spacingAndGlyphs">subscriptions</text>
<g fill="none" stroke="#ffffff" stroke-width="1.6" stroke-linecap="round" stroke-linejoin="round">
<!-- icon 1 -->
<path d="M590 515.6 H533 Q527.6 515.6 527.6 521 V579 Q527.6 584.3 533 584.3 H591 Q596.3 584.3 596.3 579 V552.5"/>
<path d="M596.3 526.5 V521 Q596.3 515.6 591 515.6"/>
<path d="M549.4 507.8 H578.7"/><circle cx="546.3" cy="507.8" r="0.4" fill="#fff"/>
<path d="M545 592 H573.5"/><circle cx="577.4" cy="592" r="0.4" fill="#fff"/>
<path d="M534.6 527.7 H551.5 M534.6 534 H547.6"/>
<path d="M535.9 567.4 L545.7 562.3 M551 562 L559.3 566.6 L567.8 555.3 M572.5 555 L581.3 566.6 H587.3"/>
<circle cx="548.4" cy="560.9" r="2.9"/><circle cx="570.2" cy="552.6" r="2.9"/>
<path d="M576.9 539.4 Q595.6 519 614.2 539.4 Q595.6 559.8 576.9 539.4 Z"/>
<circle cx="595.6" cy="539.4" r="7.2"/>
<path d="M597 535.5 Q599.5 537 599.3 540" stroke-width="1.1"/>
<path d="M615 555.9 V563.3 M611.3 559.6 H618.7 M605.4 565.8 V573.2 M601.7 569.5 H609.1"/>
<!-- icon 2 -->
<path d="M732.5 530.7 H684 Q679.7 530.7 679.7 535 V584.3"/>
<path d="M752.4 542 V584.3"/>
<path d="M732.5 535 H684 V577 H748 V544"/>
<path d="M676.5 584.3 H757.8 Q762.3 584.3 762.3 588.9 Q762.3 593.5 757.8 593.5 H676.5 Q672 593.5 672 588.9 Q672 584.3 676.5 584.3 Z"/>
<path d="M713.5 584.5 V587.5 H720.5 V584.5"/>
<rect x="691.9" y="546.2" width="17.6" height="19.8" rx="1.5"/>
<circle cx="719.4" cy="553.2" r="3.2"/>
<path d="M726.5 550.5 H740.3 M726.5 555.5 H735 M716 561.6 H740.3"/>
<path d="M686.5 520.8 H725.5 M694 524.6 H716.5"/><circle cx="683" cy="520.8" r="0.4" fill="#fff"/>
<rect x="732.6" y="525.2" width="7.7" height="15.5" rx="1"/>
<path d="M740.3 526.5 H743.5 L746 521.5 Q747 516.4 750.3 517 Q752 518 751.5 521.5 L750.8 525.6 H757.5 Q760 525.8 759.8 528.5 Q759.5 530.5 757.8 531 Q760 532 759.3 534.3 Q758.5 536 757 536.3 Q758.5 537.8 757.5 539.5 Q756.5 540.8 754.5 540.7 H740.3"/>
<path d="M730.8 506.8 Q734.8 509.5 738.8 506.8 Q736.2 510.8 738.8 514.8 Q734.8 512.2 730.8 514.8 Q733.4 510.8 730.8 506.8 Z" stroke-width="1.3"/>
<path d="M764.6 560.5 L756.5 552.8 Q754.3 550.2 755.5 547.9 Q757.5 544.5 761.5 546 L764.6 548.5 L767.7 546 Q771.7 544.5 773.7 547.9 Q774.9 550.2 772.7 552.8 Z"/>
<!-- icon 3 -->
<rect x="830.9" y="505.4" width="90.3" height="11.5" rx="5"/>
<path d="M842 517 V573.5 Q842 577.7 846.3 577.7 H907 Q911.3 577.7 911.3 573.5 V517"/>
<rect x="847" y="535.8" width="9.3" height="28.6" rx="1.3"/>
<rect x="860.2" y="544.6" width="8.8" height="19.8" rx="1.3"/>
<rect x="873.4" y="525.2" width="8.8" height="39.2" rx="1.3"/>
<path d="M889.7 545.7 H905.8 M889.7 555.6 H905.8 M889.7 560 H905 M889.7 564.4 H898"/>
<path d="M899.2 521.3 H906.9 V528.5"/>
<path d="M876 577.7 V585.8"/><circle cx="876" cy="590.2" r="4.4"/>
<path d="M834.2 537.4 V562.7 M918 526.3 V552.8"/><circle cx="834.2" cy="568" r="0.4" fill="#fff"/><circle cx="918" cy="557" r="0.4" fill="#fff"/>
<path d="M834.2 519.3 V526.7 M830.5 523 H837.9 M918 571.1 V578.5 M914.3 574.8 H921.7 M908 581 V588.4 M904.3 584.7 H911.7"/>
</g>
</svg>
</div>
<div class="a" style="left:481px;top:71px;width:2px;height:557.5px;background:#afc4de"></div>
<div class="a" style="left:481px;top:628.5px;width:485px;height:1.2px;background:rgba(255,255,255,0.9)"></div>
<div class="a" style="left:964px;top:71px;width:1.5px;height:557px;background:#dfe4ee"></div>
<!-- right float toolbar -->
<div class="a" style="left:978.4px;top:70.2px;width:29.6px;height:167px;border-radius:15px;background:#fff;box-shadow:0 1px 3px rgba(0,0,0,0.12)"></div>
<svg class="a" style="left:978px;top:70px" width="30" height="168" viewBox="978 70 30 168">
<g fill="none" stroke-linecap="round" stroke-linejoin="round">
<rect x="987.5" y="80.5" width="12" height="10" rx="1.5" stroke="#3b4350" stroke-width="1.2"/>
<path d="M993.5 83 V88 M991 85.5 H996" stroke="#3b4350" stroke-width="1.2"/>
<path d="M990 109.5 H988.5 V117 H998.5 V109.5 H997 M993.5 113 V104.5 M991 107 L993.5 104.5 L996 107" stroke="#b9bfc7" stroke-width="1.1"/>
<path d="M990.5 141 H988.5 V133 H998.5 V141 H996.5 M993.5 136 V145 M991 142.5 L993.5 145 L996 142.5" stroke="#b9bfc7" stroke-width="1.1"/>
<path d="M987.5 168 V161 Q987.5 159 989.5 159 H996.5" stroke="#3b4350" stroke-width="1.3"/>
<rect x="990" y="161.5" width="9.5" height="7.5" rx="1.3" stroke="#3b4350" stroke-width="1.3"/>
<path d="M987.5 186 H999.5 M991 186 V184.5 H996 V186 M988.5 186 L989.5 196.5 H997.5 L998.5 186 M991.8 189 V194 M995.2 189 V194" stroke="#b9bfc7" stroke-width="1.1"/>
</g>
<path d="M979 206 H1007" stroke="#eceef0" stroke-width="1"/>
<g fill="#3b4350"><circle cx="989.3" cy="221.8" r="1.3"/><circle cx="993.5" cy="221.8" r="1.3"/><circle cx="997.7" cy="221.8" r="1.3"/></g>
</svg>
<!-- scrollbar -->
<div class="a" style="left:1192px;top:185px;width:7px;height:212px;border-radius:4px;background:#9c9c9c"></div>
<!-- bottom shade -->
<div class="a" style="left:254px;top:600px;width:946px;height:36px;background:linear-gradient(rgba(0,0,0,0),rgba(0,0,0,0.03) 50%,rgba(0,0,0,0.11))"></div>
<!-- zoom widget -->
<div class="a" style="left:1006.6px;top:592px;width:135.4px;height:27.6px;border-radius:14px;background:#f6f6f6;box-shadow:0 1px 4px rgba(0,0,0,0.16)"></div>
<div class="a" style="left:1016px;top:604.5px;width:86px;height:1.2px;background:#a9a9a9"></div>
<div class="a" style="left:1016px;top:604.2px;width:13px;height:1.8px;background:#3d8ee8"></div>
<div class="a" style="left:1025px;top:600.6px;width:8.6px;height:8.6px;border-radius:50%;background:#3d8ee8"></div>
<div class="t" style="left:1116px;top:599.5px;font-size:11px;font-weight:bold;letter-spacing:-1px;color:#1e1e1e">87%</div>
<!-- help -->
<div class="a" style="left:1152.9px;top:588.5px;width:33px;height:33px;border-radius:50%;background:#c9dbf1;box-shadow:0 0 2px rgba(120,150,190,0.4)"></div>
<div class="a" style="left:1155.4px;top:590.8px;width:28px;height:28px;border-radius:50%;background:#2b3b4f"></div>
<div class="t" style="left:1155.4px;width:28px;text-align:center;top:597.5px;font-size:16.5px;font-weight:bold;color:#fff">?</div>
</body></html>
